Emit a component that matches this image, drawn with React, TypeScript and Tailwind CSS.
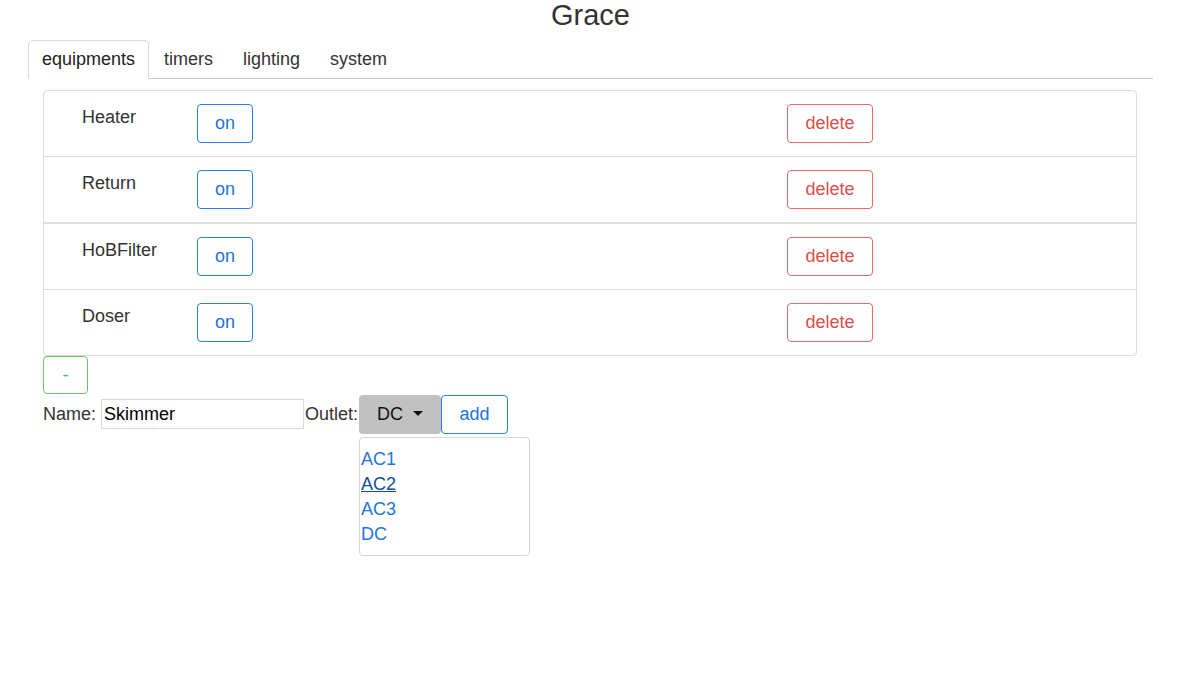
import { useState } from "react";

const items = ["Heater", "Return", "HoBFilter", "Doser"];
const outlets = ["AC1", "AC2", "AC3", "DC"];

const rowClass = [
    "flex items-start pl-[38px] py-[13px] border-b border-[#dcdcdc]",
    "flex items-start pl-[38px] py-[13px] border-b-2 border-[#e0e0e0]",
    "flex items-start pl-[38px] py-[13px] border-b border-[#dcdcdc]",
    "flex items-start pl-[38px] py-[13px]",
];

export default function App() {
    const [name, setName] = useState("Skimmer");

    return (
        <div className="min-h-[693px] bg-white text-[#333] font-['Liberation_Sans',Arial,sans-serif] text-[18px]">
            <div className="ml-[28px] w-[1125px]">
                {/* Title */}
                <h1 className="h-[40px] text-center text-[29px] leading-[30px] text-[#333]">Grace</h1>

                {/* Tabs */}
                <div className="flex border-b border-[#c8c8c8] h-[39px]">
                    <div className="-mb-px h-[39px] px-[13px] border border-[#d9d9d9] border-b-white rounded-t-[5px] bg-white flex items-center text-[#222]">
                        equipments
                    </div>
                    <div className="px-[14px] border border-transparent flex items-center">timers</div>
                    <div className="px-[14px] border border-transparent flex items-center">lighting</div>
                    <div className="px-[14px] border border-transparent flex items-center">system</div>
                </div>

                {/* Equipment list */}
                <div className="ml-[15px] mt-[11px] w-[1094px] border border-[#dcdcdc] rounded-[4px]">
                    {items.map((item, i) => (
                        <div key={item} className={rowClass[i]}>
                            <div className="w-[115px] leading-[26px] text-[#333]">{item}</div>
                            <button className="w-[56px] h-[39px] border border-[#2a80e0] rounded-[4px] text-[#1d74d8] bg-white">
                                on
                            </button>
                            <button className="ml-[534px] w-[86px] h-[39px] border border-[#e26a66] rounded-[4px] text-[#da4f4a] bg-white">
                                delete
                            </button>
                        </div>
                    ))}
                </div>

                {/* Add form */}
                <div className="ml-[15px]">
                    <button className="w-[45px] h-[38px] border border-[#6cc06c] rounded-[4px] text-[#5cb85c] bg-white">
                        -
                    </button>
                    <div className="flex items-center h-[40px]">
                        <span className="mr-[5px]">Name:</span>
                        <input
                            className="w-[203px] h-[30px] border border-[#d8d8d8] pl-[2px] text-[18px] text-black outline-none"
                            value={name}
                            onChange={(e) => setName(e.target.value)}
                        />
                        <span className="ml-[1px]">Outlet:</span>
                        <div className="relative ml-[1px]">
                            <button className="w-[82px] h-[39px] bg-[#c1c1c1] rounded-[4px] text-[#111] flex items-center justify-center gap-[10px]">
                                DC
                                <svg width="10" height="6" viewBox="0 0 10 6">
                                    <path d="M0 0 L10 0 L5 5 Z" fill="#111" />
                                </svg>
                            </button>
                            <div className="absolute left-0 top-[42px] w-[171px] h-[119px] border border-[#d6d6d6] rounded-[4px] bg-white pt-[9px] pl-[1px]">
                                {outlets.map((o) => (
                                    <div
                                        key={o}
                                        className={
                                            o === "AC2"
                                                ? "leading-[25px] text-[#0f4f95] underline"
                                                : "leading-[25px] text-[#1f77d8]"
                                        }
                                    >
                                        {o}
                                    </div>
                                ))}
                            </div>
                        </div>
                        <button className="w-[67px] h-[39px] border border-[#2a80e0] rounded-[4px] text-[#1d74d8] bg-white">
                            add
                        </button>
                    </div>
                </div>
            </div>
        </div>
    );
}
